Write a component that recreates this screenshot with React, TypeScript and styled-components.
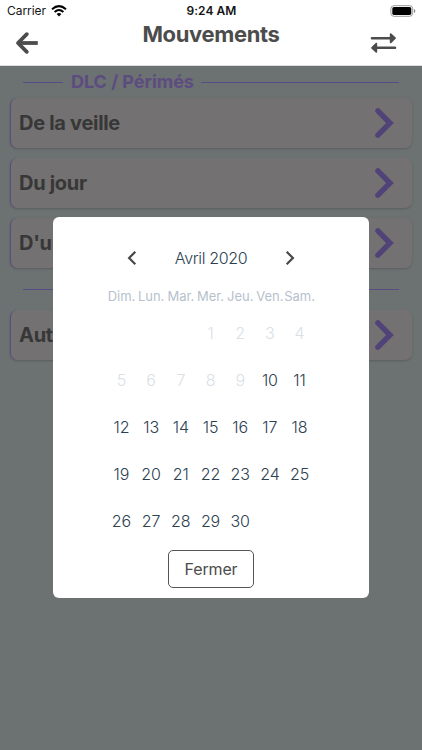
import React from "react";
import styled, { createGlobalStyle } from "styled-components";

const GlobalStyle = createGlobalStyle`
  * { box-sizing: border-box; }
  html, body { margin: 0; background: #fff; }
  body { font-family: Inter, "Liberation Sans", sans-serif; overflow: hidden; }
  button { font: inherit; letter-spacing: inherit; padding: 0; border: 0; background: none; color: inherit; }
`;

const Screen = styled.div`
  position: relative;
  width: 422px;
  height: 750px;
  display: flex;
  flex-direction: column;
  overflow: hidden;
`;

const StatusBar = styled.div`
  height: 22px;
  padding: 0 6px 0 7px;
  display: grid;
  grid-template-columns: 1fr auto 1fr;
  align-items: center;
  font-size: 12px;
  line-height: 22px;
  color: #151515;
`;

const Carrier = styled.div`
  display: flex;
  align-items: center;
  gap: 5px;
  letter-spacing: -0.05px;
`;

const Clock = styled.div`
  font-weight: 600;
  letter-spacing: 0.05px;
`;

const BatterySlot = styled.div`
  display: flex;
  justify-content: flex-end;
`;

const Header = styled.header`
  height: 44px;
  padding: 0 25px 0 15px;
  display: grid;
  grid-template-columns: 1fr auto 1fr;
  border-bottom: 1px solid #dcdfdf;
`;

const HeaderButton = styled.button<{ $top: number; $end?: boolean }>`
  display: flex;
  align-items: flex-start;
  justify-content: ${(p) => (p.$end ? "flex-end" : "flex-start")};
  padding-top: ${(p) => p.$top}px;
`;

const Title = styled.h1`
  margin: 0;
  padding-left: 10px;
  font-size: 22px;
  line-height: 25px;
  font-weight: 700;
  letter-spacing: -0.35px;
  color: #4c4c4c;
`;

const Content = styled.main`
  flex: 1;
  padding: 0 10px;
  background: #6c7172;
`;

const Divider = styled.div<{ $bottom?: number }>`
  display: flex;
  align-items: center;
  height: 32px;
  padding: 0 13px ${(p) => p.$bottom ?? 0}px;
`;

const Rule = styled.span<{ $width?: number }>`
  flex: ${(p) => (p.$width ? `0 0 ${p.$width}px` : "1")};
  height: 1px;
  background: #574d84;
`;

const DividerLabel = styled.span`
  padding: 0 7px 0 8px;
  font-size: 18px;
  font-weight: 700;
  line-height: 30px;
  letter-spacing: -0.03px;
  white-space: nowrap;
  color: #5c4c80;
`;

const MenuRow = styled.button`
  display: flex;
  align-items: center;
  justify-content: space-between;
  width: 402px;
  height: 50px;
  margin-bottom: 10px;
  padding: 0 18px 0 7px;
  border-left: 1px solid #574d84;
  border-radius: 7px;
  background: #737171;
  box-shadow: 0 1px 2px rgba(50, 50, 50, 0.3);
  font-size: 20px;
  font-weight: 700;
  letter-spacing: -0.3px;
  color: #373737;
`;

const RowLabel = styled.span`
  padding-left: 1px;
`;

const Modal = styled.section`
  position: absolute;
  left: 53px;
  top: 217px;
  width: 316px;
  height: 381px;
  padding-top: 21px;
  display: flex;
  flex-direction: column;
  align-items: center;
  border-radius: 6px;
  background: #fff;
`;

const MonthBar = styled.div`
  width: 171px;
  height: 40px;
  display: flex;
  align-items: center;
  justify-content: space-between;
`;

const MonthName = styled.span`
  font-size: 16px;
  font-weight: 300;
  letter-spacing: -0.35px;
  color: #2d4150;
`;

const ArrowButton = styled.button`
  display: flex;
`;

const WeekHeader = styled.div`
  display: grid;
  grid-template-columns: repeat(7, 29.7px);
  height: 32px;
  margin-right: 1px;
  font-size: 13px;
  line-height: 36px;
  letter-spacing: -0.03px;
  color: #b6c1cd;
`;

const WeekDay = styled.span`
  display: flex;
  justify-content: center;
  white-space: nowrap;
`;

const Days = styled.div`
  display: grid;
  grid-template-columns: repeat(7, 29.7px);
  grid-auto-rows: 46.8px;
  margin-right: 1px;
`;

const Day = styled.button<{ $disabled: boolean }>`
  text-align: center;
  font-size: 16px;
  font-weight: 300;
  letter-spacing: -0.1px;
  color: ${(p) => (p.$disabled ? "#d9e1e8" : "#2d4150")};
`;

const CloseButton = styled.button`
  width: 86px;
  height: 38px;
  margin-top: 6px;
  border: 1px solid #555;
  border-radius: 5px;
  font-size: 16px;
  letter-spacing: -0.15px;
  color: #4c4c4c;
`;

const WifiIcon = () => (
  <svg width="16" height="12" viewBox="0 0 16 12" fill="none" stroke="#000" strokeWidth="2">
    <path d="M1 4.2Q8-2 15 4.2" />
    <path d="M3.6 6.9Q8 3.1 12.4 6.9" />
    <path d="M5.6 9Q8 7 10.4 9L8 11.4Z" fill="#000" stroke="none" />
  </svg>
);

const BatteryIcon = () => (
  <svg width="26" height="12" viewBox="0 0 26 12">
    <rect x="0.9" y="0.7" width="21.8" height="10.6" rx="3" fill="none" stroke="#999" />
    <rect x="2.3" y="2.1" width="19" height="7.8" rx="1.6" fill="#000" />
    <path d="M24 4v4q1.3-.6 1.3-2T24 4" fill="#888" />
  </svg>
);

const BackIcon = () => (
  <svg width="24" height="24" viewBox="0 0 24 24" fill="none" stroke="#4c4c4c" strokeWidth="3.8" strokeLinecap="round" strokeLinejoin="round">
    <path d="M11.8 3.2L3 12L11.8 20.8" />
    <path d="M3 12H22.8" strokeLinecap="butt" />
  </svg>
);

const SwapIcon = () => (
  <svg width="27" height="22" viewBox="0 0 27 22" fill="#4c4c4c" stroke="#4c4c4c" strokeLinejoin="round" strokeLinecap="round">
    <path d="M2 6.2H21M6 15.8H25" strokeWidth="2.6" fill="none" />
    <path d="M20.7 2.1L25 6.2L20.7 10.3ZM6.3 11.7L2 15.8L6.3 19.9Z" strokeWidth="1.8" />
  </svg>
);

const ChevronIcon = () => (
  <svg width="20" height="32" viewBox="0 0 20 32" fill="none" stroke="#4f4378" strokeWidth="5.4" strokeLinecap="round">
    <path d="M3.9 3.8L16 16L3.9 28.2" />
  </svg>
);

const MonthArrow = ({ next = false }: { next?: boolean }) => (
  <svg width="12" height="16" viewBox="0 0 12 16" fill="none" stroke="#484848" strokeWidth="2.2">
    <path d={next ? "M2.7 1.8L8.9 8L2.7 14.2" : "M9.3 1.8L3.1 8L9.3 14.2"} />
  </svg>
);

const weekDays = ["Dim.", "Lun.", "Mar.", "Mer.", "Jeu.", "Ven.", "Sam."];
const monthCells = [null, null, null, ...Array.from({ length: 30 }, (_, i) => i + 1)];
const firstOpenDay = 10;

const Row = ({ label }: { label: string }) => (
  <MenuRow>
    <RowLabel>{label}</RowLabel>
    <ChevronIcon />
  </MenuRow>
);

export default function App() {
  return (
    <>
      <GlobalStyle />
      <Screen>
        <StatusBar>
          <Carrier>Carrier <WifiIcon /></Carrier>
          <Clock>9:24 AM</Clock>
          <BatterySlot><BatteryIcon /></BatterySlot>
        </StatusBar>
        <Header>
          <HeaderButton $top={9} aria-label="Retour"><BackIcon /></HeaderButton>
          <Title>Mouvements</Title>
          <HeaderButton $top={10} $end aria-label="Échanger"><SwapIcon /></HeaderButton>
        </Header>
        <Content>
          <Divider>
            <Rule $width={40} />
            <DividerLabel>DLC / Périmés</DividerLabel>
            <Rule />
          </Divider>
          <Row label="De la veille" />
          <Row label="Du jour" />
          <Row label="D'un jour" />
          <Divider $bottom={10}><Rule /></Divider>
          <Row label="Autre" />
        </Content>
        <Modal role="dialog">
          <MonthBar>
            <ArrowButton aria-label="Mois précédent"><MonthArrow /></ArrowButton>
            <MonthName>Avril 2020</MonthName>
            <ArrowButton aria-label="Mois suivant"><MonthArrow next /></ArrowButton>
          </MonthBar>
          <WeekHeader>
            {weekDays.map((d) => <WeekDay key={d}>{d}</WeekDay>)}
          </WeekHeader>
          <Days>
            {monthCells.map((n, i) =>
              n === null ? <span key={i} /> : <Day key={i} $disabled={n < firstOpenDay}>{n}</Day>
            )}
          </Days>
          <CloseButton>Fermer</CloseButton>
        </Modal>
      </Screen>
    </>
  );
}
